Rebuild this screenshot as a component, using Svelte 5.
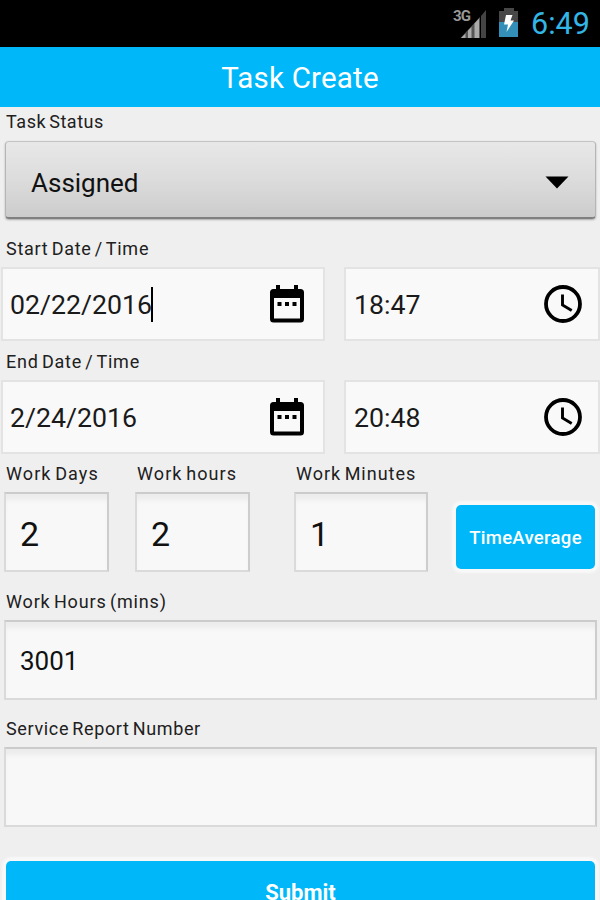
<script>
  const startDate = '02/22/2016';
  const endDate = '2/24/2016';
</script>

{#snippet calendar()}
  <svg class="calendar" width="34" height="38" viewBox="0 0 34 38">
    <path fill="#000" fill-rule="evenodd" d="M6 0h4v4h14V0h4v4h2.500a3.500 3.500 0 0 1 3.500 3.500V34a3.500 3.500 0 0 1-3.500 3.500h-27A3.500 3.500 0 0 1 0 34V7.500A3.500 3.500 0 0 1 3.500 4H6zM4 13v20.500h26V13z" />
    <path fill="#000" d="M7.500 17h4v4h-4zm7.500 0h4v4h-4zm7.500 0h4v4h-4z" />
  </svg>
{/snippet}

{#snippet clock()}
  <svg class="clock" width="38" height="38" viewBox="0 0 38 38" fill="none" stroke="#000">
    <circle cx="19" cy="19" r="17" stroke-width="3.800" />
    <path stroke-width="2.900" d="M18.500 9.500v10.500l9.200 5.400" />
  </svg>
{/snippet}

<div class="screen">
  <div class="status">
    <svg width="36" height="32" viewBox="0 0 36 32">
      <text x="0" y="12.500" class="net" textLength="18">3G</text>
      <path fill="#555" d="M7.500 30L27 9v21z" />
      <path fill="#aaa" d="M8 30l4.500-4.500V30zM15 30v-7.500l3.500-3.500V30zM21.500 30V15.500l4.500-5V30z" />
      <path fill="#444" d="M28 30V8l5-6v28z" />
    </svg>
    <svg class="battery" width="20" height="30" viewBox="0 0 20 30">
      <path fill="#484848" d="M5 0h10v3h4v12H0V3h5z" />
      <path fill="#338fb8" d="M0 14h19v15H0z" />
      <path fill="#fff" d="M7 7h6.500l-2 5.500h3.500L7.500 24l1.500-7.500H5z" />
    </svg>
    <span class="time">6:49</span>
  </div>
  <header><span>Task Create</span></header>

  <main>
    <div class="label first">Task Status</div>
    <div class="select">
      <span>Assigned</span>
      <svg width="24" height="13" viewBox="0 0 24 13"><path d="M0.500 0.500h23L12 12.500z" /></svg>
    </div>

    <div class="label start">Start Date / Time</div>
    <div class="pair">
      <div class="box date"><span class="d1">{startDate}<i class="caret"></i></span>{@render calendar()}</div>
      <div class="box hour"><span class="t">18:47</span>{@render clock()}</div>
    </div>

    <div class="label end">End Date / Time</div>
    <div class="pair">
      <div class="box date"><span class="d2">{endDate}</span>{@render calendar()}</div>
      <div class="box hour"><span class="t">20:48</span>{@render clock()}</div>
    </div>

    <div class="work">
      <div class="days">
        <div class="label">Work Days</div>
        <div class="field big">2</div>
      </div>
      <div class="hours">
        <div class="label">Work hours</div>
        <div class="field big">2</div>
      </div>
      <div class="minutes">
        <div class="label">Work Minutes</div>
        <div class="field big">1</div>
      </div>
      <button class="average"><span>TimeAverage</span></button>
    </div>

    <div class="label total">Work Hours (mins)</div>
    <div class="field wide">3001</div>

    <div class="label report">Service Report Number</div>
    <div class="field wide"></div>

    <button class="submit"><span>Submit</span></button>
  </main>
</div>

<style>
  :global(body) {
    margin: 0;
    overflow: hidden;
    background: #efefef;
  }
  .screen {
    width: 600px;
    height: 900px;
    overflow: hidden;
    background: #efefef;
    font-family: Roboto, sans-serif;
    color: #1a1a1a;
    white-space: nowrap;
  }
  svg {
    display: block;
    flex: none;
  }
  .status {
    height: 47px;
    box-sizing: border-box;
    padding: 8px 11px 0 453px;
    background: #000;
    display: flex;
    align-items: flex-start;
  }
  .net {
    font: bold 15px Roboto, sans-serif;
    fill: #999;
  }
  .battery {
    margin-left: 10px;
  }
  .time {
    margin-left: 12px;
    font-size: 30.5px;
    line-height: 32px;
    color: #33b5e5;
  }
  header {
    height: 60px;
    background: #00b8f9;
    color: #fff;
    font-size: 29.5px;
    letter-spacing: 0.2px;
    line-height: 62px;
    text-align: center;
  }
  .label {
    height: 20px;
    padding-left: 6px;
    margin-bottom: 8px;
    font-size: 18px;
    line-height: 20px;
    letter-spacing: 0.85px;
    word-spacing: -2px;
    color: #202020;
  }
  .first {
    padding-top: 5px;
    margin-bottom: 9px;
    letter-spacing: 0.55px;
  }
  .select {
    height: 78px;
    box-sizing: border-box;
    margin: 0 4px 0 5px;
    padding: 6px 26px 0 25px;
    display: flex;
    align-items: center;
    justify-content: space-between;
    border: 1px solid #b5b5b5;
    border-top-color: #c4c4c4;
    border-bottom: 2px solid #808080;
    border-radius: 4px;
    background: linear-gradient(#e8e8e8, #dcdcdc 50%, #cccccc);
    box-shadow: 0 1px 2px #aaa;
    font-size: 26px;
    color: #111;
  }
  .start {
    margin-top: 20px;
    letter-spacing: 0.73px;
  }
  .end {
    margin-top: 11px;
    letter-spacing: 0.78px;
  }
  .pair {
    display: flex;
    justify-content: space-between;
  }
  .box {
    height: 74px;
    box-sizing: border-box;
    border: 2px solid #e3e3e3;
    background: #f9f9f9;
    display: flex;
    align-items: center;
    justify-content: space-between;
    font-size: 26.7px;
  }
  .box span {
    padding-top: 1px;
  }
  .date {
    width: 324px;
    margin-left: 1px;
    padding: 0 19px 0 7px;
  }
  .hour {
    width: 256px;
    padding: 0 16px 0 8px;
  }
  .caret {
    display: inline-block;
    width: 2px;
    height: 35px;
    margin: -12px 0 -8px -1px;
    background: #000;
    vertical-align: middle;
  }
  .work {
    display: flex;
    align-items: flex-start;
    padding: 10px 5px 0 4px;
  }
  .work .label {
    padding-left: 2px;
    letter-spacing: 1.1px;
  }
  .work .minutes .label {
    letter-spacing: 1px;
  }
  .days {
    width: 131px;
  }
  .hours {
    width: 159px;
  }
  .minutes {
    width: 162px;
  }
  .days .field {
    width: 105px;
  }
  .hours .field {
    width: 115px;
  }
  .minutes .field {
    width: 134px;
  }
  .field {
    height: 80px;
    box-sizing: border-box;
    padding-left: 14px;
    border: 2px solid #dadada;
    border-top-color: #cbcbcb;
    border-right-color: #cdcdcd;
    background: #f8f8f8;
    box-shadow: inset 0 8px 5px -2px #ececec;
    line-height: 78px;
    color: #111;
  }
  .big {
    font-size: 34px;
    line-height: 80px;
  }
  .wide {
    margin: 0 3px 0 4px;
    font-size: 26px;
  }
  button {
    display: block;
    border: 0;
    padding: 0;
    background: #00b8f9;
    color: #fff;
    font-family: inherit;
    border-radius: 5px;
    box-shadow: 0 0 2px 4px #f8f8f8;
  }
  .average {
    width: 139px;
    height: 64px;
    margin-top: 41px;
    padding-top: 2px;
    flex: none;
    font-size: 18.5px;
    letter-spacing: 0.3px;
    font-weight: 500;
  }
  .total {
    margin-top: 20px;
  }
  .report {
    margin-top: 19px;
    letter-spacing: 0.65px;
  }
  .submit {
    width: 589px;
    height: 62px;
    margin: 34px 0 0 6px;
    font-size: 22px;
    font-weight: bold;
  }
</style>
